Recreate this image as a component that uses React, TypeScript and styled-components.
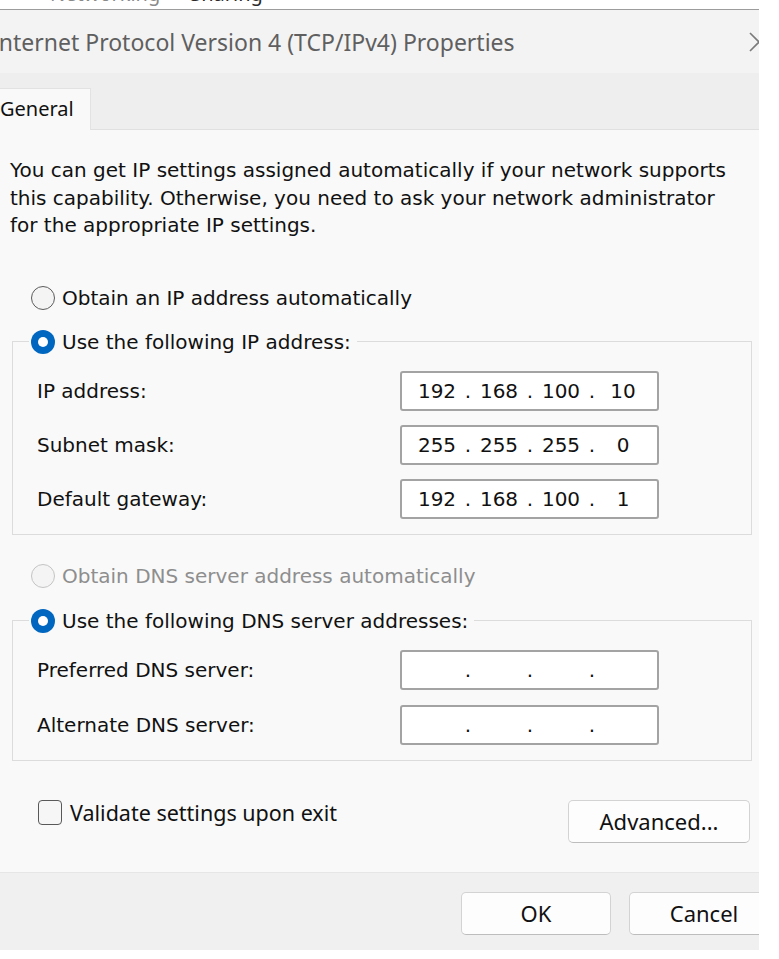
import React from "react";
import styled, { createGlobalStyle, css } from "styled-components";

const SHELL = `"DejaVu Sans", "Liberation Sans", sans-serif`;
const SEGOE = `"Noto Sans", "Open Sans", sans-serif`;

const GlobalStyle = createGlobalStyle`
  html, body { margin: 0; padding: 0; background: #ffffff; }
  body { width: 779px; height: 959px; overflow: hidden; }
`;

const Page = styled.div`
  width: 779px;
  height: 959px;
  background: #ffffff;
  overflow: hidden;
`;

const Viewport = styled.div`
  width: 759px;
  height: 950px;
  overflow: hidden;
  display: flex;
  flex-direction: column;
`;

const BehindStrip = styled.div`
  height: 9px;
  overflow: hidden;
  flex: none;
`;

const BehindTabs = styled.div`
  display: flex;
  margin-top: -18px;
  padding-left: 50px;
  gap: 30px;
  font-family: ${SEGOE};
  font-size: 20px;
  line-height: 24px;
`;

const BehindTab = styled.span<{ $active?: boolean }>`
  color: ${(p) => (p.$active ? "#2a2a2a" : "#8a8a8a")};
`;

const Window = styled.div`
  width: 810px;
  margin-left: -20px;
  flex: 1;
  display: flex;
  flex-direction: column;
  border-top: 1px solid #9c9c9c;
`;

const TitleBar = styled.div`
  height: 63px;
  background: #f3f3f3;
  display: flex;
  align-items: center;
  padding-left: 11px;
  flex: none;
`;

const Title = styled.span`
  font-family: ${SEGOE};
  font-size: 23px;
  color: #5f5f5f;
  white-space: nowrap;
`;

const CloseButton = styled.div`
  margin-left: auto;
  width: 62px;
  height: 100%;
  display: flex;
  align-items: center;
  justify-content: center;
`;

const TabStrip = styled.div`
  height: 57px;
  background: #eeeeee;
  display: flex;
  flex: none;
`;

const TabFill = styled.div<{ $grow?: boolean }>`
  width: 8px;
  flex: ${(p) => (p.$grow ? 1 : "none")};
  border-bottom: 1px solid #e0e0e0;
`;

const Tab = styled.div`
  margin-top: 15px;
  background: #f9f9f9;
  border: 1px solid #e2e2e2;
  border-bottom: none;
  padding: 0 16px 2px 11px;
  display: flex;
  align-items: center;
  font-family: ${SEGOE};
  font-size: 20px;
  color: #111111;
`;

const Panel = styled.div`
  background: #f9f9f9;
  padding: 27px 38px 29px 30px;
  display: flex;
  flex-direction: column;
  flex: none;
`;

const Description = styled.p`
  margin: 0;
  font-family: ${SHELL};
  font-size: 20px;
  line-height: 27.5px;
  color: #111111;
  white-space: nowrap;
`;

const RadioRow = styled.div<{ $top: number; $disabled?: boolean }>`
  margin-top: ${(p) => p.$top}px;
  height: 30px;
  padding-left: 21px;
  display: flex;
  align-items: center;
  gap: 7px;
  font-family: ${SHELL};
  font-size: 20px;
  color: ${(p) => (p.$disabled ? "#8e8e8e" : "#111111")};
  white-space: nowrap;
`;

const Radio = styled.span<{ $checked?: boolean; $disabled?: boolean }>`
  width: 24px;
  height: 24px;
  box-sizing: border-box;
  border-radius: 50%;
  flex: none;
  display: flex;
  align-items: center;
  justify-content: center;
  ${(p) =>
    p.$checked
      ? css`
          background: #0067c0;
          &::after {
            content: "";
            width: 10px;
            height: 10px;
            border-radius: 50%;
            background: #ffffff;
          }
        `
      : css`
          background: #f4f4f4;
          border: 1.5px solid ${p.$disabled ? "#c4c4c4" : "#5c5c5c"};
        `}
`;

const Group = styled.fieldset<{ $top: number }>`
  margin: ${(p) => p.$top}px 0 0 2px;
  border: 1px solid #dcdcdc;
  padding: 15px 0 15px 16px;
  min-width: 0;
`;

const Legend = styled.legend`
  padding: 0 6px 0 2px;
  height: 28px;
  display: flex;
  align-items: center;
  gap: 7px;
  font-family: ${SHELL};
  font-size: 20px;
  color: #111111;
  white-space: nowrap;
`;

const Rows = styled.div<{ $gap: number }>`
  display: grid;
  grid-template-columns: 363px 259px;
  grid-auto-rows: 40px;
  row-gap: ${(p) => p.$gap}px;
  padding-left: 8px;
  align-items: center;
`;

const FieldLabel = styled.span`
  font-family: ${SHELL};
  font-size: 20px;
  color: #111111;
  white-space: nowrap;
`;

const IpBox = styled.div`
  width: 259px;
  height: 40px;
  box-sizing: border-box;
  background: #ffffff;
  border: 2px solid #a3a3a3;
  border-radius: 3px;
  padding-left: 10px;
  display: grid;
  grid-template-columns: 50px 12px 50px 12px 50px 12px 50px;
  align-items: center;
  font-family: ${SHELL};
  font-size: 20px;
  color: #111111;
`;

const Octet = styled.span`
  text-align: center;
`;

const Dot = styled.span`
  text-align: center;
`;

const BottomRow = styled.div`
  margin-top: 39px;
  display: flex;
  justify-content: space-between;
  align-items: flex-start;
  padding-left: 28px;
  padding-right: 2px;
`;

const CheckRow = styled.label`
  display: flex;
  align-items: center;
  gap: 8px;
  font-family: ${SEGOE};
  font-size: 21.5px;
  color: #111111;
  height: 25px;
`;

const CheckBox = styled.span`
  width: 24px;
  height: 25px;
  box-sizing: border-box;
  border: 1.5px solid #595959;
  border-radius: 4px;
  background: #f6f6f6;
  flex: none;
`;

const Button = styled.button<{ $w: number }>`
  width: ${(p) => p.$w}px;
  height: 43px;
  box-sizing: border-box;
  background: #fdfdfd;
  border: 1px solid #d3d3d3;
  border-bottom-color: #bdbdbd;
  border-radius: 5px;
  font-family: ${SEGOE};
  font-size: 22px;
  color: #111111;
  padding: 0;
`;

const Footer = styled.div`
  flex: 1;
  background: #f0f0f0;
  border-top: 1px solid #e6e6e6;
  padding: 19px 11px 0 0;
  display: flex;
  justify-content: flex-end;
  align-items: flex-start;
  gap: 18px;
`;

const IpInput: React.FC<{ value?: [string, string, string, string] }> = ({ value }) => {
  const v = value ?? ["", "", "", ""];
  return (
    <IpBox>
      <Octet>{v[0]}</Octet>
      <Dot>.</Dot>
      <Octet>{v[1]}</Octet>
      <Dot>.</Dot>
      <Octet>{v[2]}</Octet>
      <Dot>.</Dot>
      <Octet>{v[3]}</Octet>
    </IpBox>
  );
};

export default function App() {
  return (
    <Page>
      <GlobalStyle />
      <Viewport>
        <BehindStrip>
          <BehindTabs>
            <BehindTab>Networking</BehindTab>
            <BehindTab $active>Sharing</BehindTab>
          </BehindTabs>
        </BehindStrip>
        <Window>
          <TitleBar>
            <Title>Internet Protocol Version 4 (TCP/IPv4) Properties</Title>
            <CloseButton>
              <svg width="20" height="20" viewBox="0 0 20 20">
                <path d="M1 1 L19 19 M19 1 L1 19" stroke="#7a7a7a" strokeWidth="1.6" fill="none" />
              </svg>
            </CloseButton>
          </TitleBar>
          <TabStrip>
            <TabFill />
            <Tab>General</Tab>
            <TabFill $grow />
          </TabStrip>
          <Panel>
            <Description>
              You can get IP settings assigned automatically if your network supports
              <br />
              this capability. Otherwise, you need to ask your network administrator
              <br />
              for the appropriate IP settings.
            </Description>
            <RadioRow $top={43}>
              <Radio />
              Obtain an IP address automatically
            </RadioRow>
            <Group $top={15}>
              <Legend>
                <Radio $checked />
                Use the following IP address:
              </Legend>
              <Rows $gap={14}>
                <FieldLabel>IP address:</FieldLabel>
                <IpInput value={["192", "168", "100", "10"]} />
                <FieldLabel>Subnet mask:</FieldLabel>
                <IpInput value={["255", "255", "255", "0"]} />
                <FieldLabel>Default gateway:</FieldLabel>
                <IpInput value={["192", "168", "100", "1"]} />
              </Rows>
            </Group>
            <RadioRow $top={26} $disabled>
              <Radio $disabled />
              Obtain DNS server address automatically
            </RadioRow>
            <Group $top={16}>
              <Legend>
                <Radio $checked />
                Use the following DNS server addresses:
              </Legend>
              <Rows $gap={15}>
                <FieldLabel>Preferred DNS server:</FieldLabel>
                <IpInput />
                <FieldLabel>Alternate DNS server:</FieldLabel>
                <IpInput />
              </Rows>
            </Group>
            <BottomRow>
              <CheckRow>
                <CheckBox />
                Validate settings upon exit
              </CheckRow>
              <Button $w={182}>Advanced...</Button>
            </BottomRow>
          </Panel>
          <Footer>
            <Button $w={150}>OK</Button>
            <Button $w={150}>Cancel</Button>
          </Footer>
        </Window>
      </Viewport>
    </Page>
  );
}
